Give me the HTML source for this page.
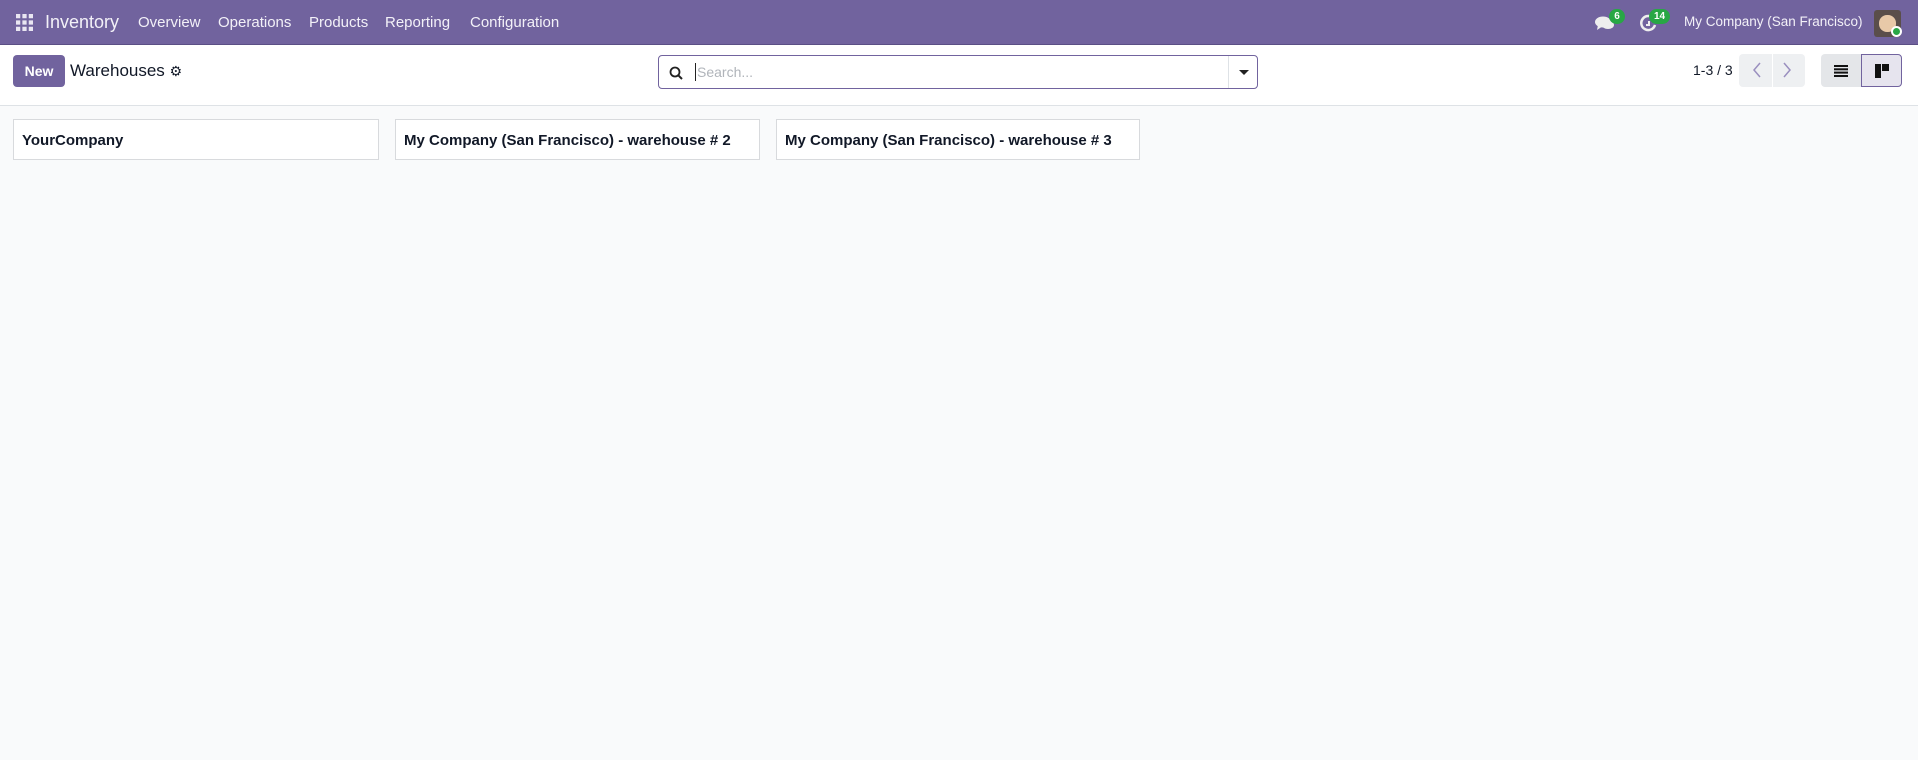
<!DOCTYPE html>
<html><head><meta charset="utf-8"><style>
*{box-sizing:border-box;margin:0;padding:0}
body{width:1918px;height:760px;background:#f9fafb;font-family:"Liberation Sans","DejaVu Sans",sans-serif;color:#111827;overflow:hidden;position:relative}
.nav{position:absolute;left:0;top:0;width:1918px;height:45px;background:#71639e;border-bottom:1px solid #5b4f85;color:#fff}
.nav span{position:absolute;top:14px;font-size:15px;color:#f3f1f8;white-space:nowrap}
.cp{position:absolute;left:0;top:45px;width:1918px;height:61px;background:#fff;border-bottom:1px solid #dee2e6}
.card{position:absolute;top:119px;height:41px;background:#fff;border:1px solid #d8dadd;font-weight:bold;font-size:15px;padding:12px 0 0 8px;white-space:nowrap}
.badge{position:absolute;background:#28a745;color:#fff;font-size:10px;font-weight:bold;border-radius:9px;height:15px;line-height:15px;text-align:center}
</style></head><body>
<div class="nav">
 <svg style="position:absolute;left:16px;top:14px" width="17" height="17" viewBox="0 0 16 16" fill="#e9e6f2">
  <rect x="0" y="0" width="4" height="4"/><rect x="6" y="0" width="4" height="4"/><rect x="12" y="0" width="4" height="4"/>
  <rect x="0" y="6" width="4" height="4"/><rect x="6" y="6" width="4" height="4"/><rect x="12" y="6" width="4" height="4"/>
  <rect x="0" y="12" width="4" height="4"/><rect x="6" y="12" width="4" height="4"/><rect x="12" y="12" width="4" height="4"/></svg>
 <span style="left:45px;top:12px;font-size:18px">Inventory</span>
 <span style="left:138px">Overview</span>
 <span style="left:218px">Operations</span>
 <span style="left:309px">Products</span>
 <span style="left:385px">Reporting</span>
 <span style="left:470px">Configuration</span>
 <svg style="position:absolute;left:1595px;top:15px" width="20" height="16" viewBox="0 0 20 16" fill="#eee"><ellipse cx="8" cy="7" rx="8" ry="5.5"/><path d="M3 10 L2 15 L8 11Z"/><ellipse cx="13" cy="10" rx="6" ry="4"/></svg>
 <div class="badge" style="left:1609px;top:9px;width:16px">6</div>
 <svg style="position:absolute;left:1640px;top:14px" width="18" height="18" viewBox="0 0 18 18"><path d="M14 5 A7 7 0 1 0 15 11" stroke="#eee" stroke-width="2.5" fill="none"/><path d="M9 7v4h-3" stroke="#eee" stroke-width="2" fill="none"/></svg>
 <div class="badge" style="left:1649px;top:9px;width:21px">14</div>
 <span style="left:1684px;font-size:13.5px">My Company (San Francisco)</span>
 <div style="position:absolute;left:1874px;top:10px;width:27px;height:27px;border-radius:3px;background:#5a4e4a"></div>
 <div style="position:absolute;left:1879px;top:15px;width:17px;height:17px;border-radius:8px;background:#e8c9a8"></div>
 <div style="position:absolute;left:1891px;top:26px;width:11px;height:11px;border-radius:6px;background:#28a745;border:2px solid #fff"></div>
</div>
<div class="cp">
 <div style="position:absolute;left:13px;top:10px;width:52px;height:32px;background:#71639e;border-radius:4px;color:#fff;font-weight:bold;font-size:14px;text-align:center;line-height:32px">New</div>
 <div style="position:absolute;left:70px;top:16px;font-size:17px;white-space:nowrap">Warehouses <span style="font-size:14px">&#9881;</span></div>
 <div style="position:absolute;left:658px;top:10px;width:600px;height:34px;border:1px solid #71639e;border-radius:4px;background:#fff">
  <svg style="position:absolute;left:10px;top:10px" width="14" height="14" viewBox="0 0 14 14"><circle cx="6" cy="6" r="4.5" stroke="#222" stroke-width="1.8" fill="none"/><path d="M9.3 9.3L13 13" stroke="#222" stroke-width="2"/></svg>
  <div style="position:absolute;left:36px;top:7px;width:1px;height:18px;background:#222"></div>
  <span style="position:absolute;left:38px;top:8px;font-size:14px;color:#b0b4ba">Search...</span>
  <div style="position:absolute;left:569px;top:0;width:1px;height:32px;background:#dee2e6"></div>
  <div style="position:absolute;left:580px;top:14px;border-left:5px solid transparent;border-right:5px solid transparent;border-top:5px solid #222"></div>
 </div>
 <span style="position:absolute;left:1693px;top:17px;font-size:14px">1-3 / 3</span>
 <div style="position:absolute;left:1739px;top:9px;width:66px;height:33px;background:#eef0f2;border-radius:4px"></div>
 <div style="position:absolute;left:1772px;top:9px;width:1px;height:33px;background:#fff"></div>
 <svg style="position:absolute;left:1750px;top:15px" width="44" height="20" viewBox="0 0 44 20"><path d="M10 3L4 10L10 17" stroke="#9a8fbf" stroke-width="1.5" fill="none"/><path d="M34 3L40 10L34 17" stroke="#9a8fbf" stroke-width="1.5" fill="none"/></svg>
 <div style="position:absolute;left:1821px;top:9px;width:40px;height:33px;background:#e4e6e9;border-radius:4px 0 0 4px"></div>
 <svg style="position:absolute;left:1834px;top:20px" width="14" height="12" viewBox="0 0 14 12" fill="#111"><rect y="0" width="14" height="2"/><rect y="3.3" width="14" height="2"/><rect y="6.6" width="14" height="2"/><rect y="10" width="14" height="2"/></svg>
 <div style="position:absolute;left:1861px;top:9px;width:41px;height:33px;background:#e6e4ee;border:1px solid #71639e;border-radius:0 4px 4px 0"></div>
 <svg style="position:absolute;left:1875px;top:19px" width="14" height="14" viewBox="0 0 14 14" fill="#111"><rect x="0" y="0" width="6" height="14"/><rect x="7" y="0" width="7" height="7"/></svg>
</div>
<div class="card" style="left:13px;width:366px">YourCompany</div>
<div class="card" style="left:395px;width:365px">My Company (San Francisco) - warehouse # 2</div>
<div class="card" style="left:776px;width:364px">My Company (San Francisco) - warehouse # 3</div>
</body></html>
